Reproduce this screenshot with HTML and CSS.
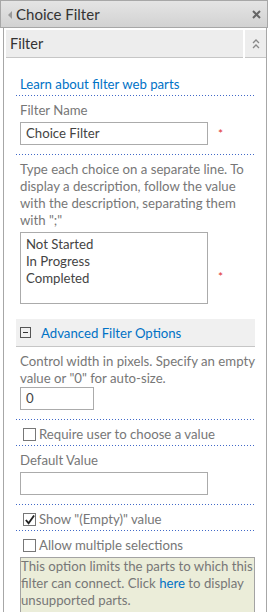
FILE: index.html
```html
<!DOCTYPE html>
<html lang="en">
<head>
  <meta charset="UTF-8" />
  <title>Choice Filter</title>
  <link rel="stylesheet" href="styles.css">
</head>
<body>
  <header class="pane-head">
    <span class="back-arrow"></span>
    <span class="pane-title">Choice Filter</span>
    <svg class="close-icon" width="9" height="9" viewBox="0 0 9 9">
      <path d="M1 1 L8 8 M8 1 L1 8" stroke="#666" stroke-width="2"/>
    </svg>
  </header>

  <div class="pane-body">
    <div class="section-bar">
      <div class="section-title">Filter</div>
      <div class="section-toggle">
        <svg width="8" height="10" viewBox="0 0 8 10">
          <path d="M1 4 L4 1 L7 4 M1 9 L4 6 L7 9" stroke="#888" stroke-width="1.3" fill="none"/>
        </svg>
      </div>
    </div>

    <div class="content">
      <div class="row link-row"><a href="#">Learn about filter web parts</a></div>

      <div class="row">
        <div class="label">Filter Name</div>
        <div class="field-line">
          <div class="input wide">Choice Filter</div>
          <span class="req">*</span>
        </div>
      </div>

      <div class="row plain">
        <p class="help">Type each choice on a separate line. To display a description, follow the value with the description, separating them with ";"</p>
        <div class="field-line">
          <div class="input wide area">Not Started<br>In Progress<br>Completed</div>
          <span class="req low">*</span>
        </div>
      </div>

      <div class="adv-bar">
        <span class="minus-box"></span>
        <a href="#">Advanced Filter Options</a>
      </div>

      <div class="row">
        <p class="help">Control width in pixels. Specify an empty value or "0" for auto-size.</p>
        <div class="input narrow">0</div>
      </div>

      <div class="row check-row">
        <span class="check"></span>Require user to choose a value
      </div>

      <div class="row">
        <div class="label">Default Value</div>
        <div class="input wide"></div>
      </div>

      <div class="row check-row">
        <span class="check">
          <svg width="12" height="12" viewBox="0 0 12 12">
            <path d="M2 6 L5 9.5 L11 1" stroke="#222" stroke-width="2" fill="none"/>
          </svg>
        </span>Show "(Empty)" value
      </div>

      <div class="check-row last">
        <span class="check"></span>Allow multiple selections
      </div>

      <div class="notice">This option limits the parts to which this filter can connect. Click <a href="#">here</a> to display unsupported parts.</div>
    </div>
  </div>
</body>
</html>
```

FILE: styles.css
```css
body {
  margin: 0;
  font-family: 'Lato', sans-serif;
  font-size: 13.2px;
  color: #777;
  background: #fff;
  height: 612px;
  overflow: hidden;
}

a {
  color: #0072c6;
  text-decoration: none;
}

.pane-head {
  display: flex;
  align-items: center;
  height: 26px;
  border: 1px solid #a7a7a7;
  background: linear-gradient(#e4e4e4, #d2d2d2);
}

.back-arrow {
  width: 0;
  height: 0;
  margin: 1px 4px 0 7px;
  border-top: 4px solid transparent;
  border-bottom: 4px solid transparent;
  border-right: 4px solid #999;
}

.pane-title {
  flex: 1;
  font-size: 15px;
  color: #333;
}

.close-icon {
  margin-right: 6px;
}

.pane-body {
  margin-left: 3px;
  margin-right: 1px;
  border-left: 1px solid #a7a7a7;
  border-right: 1px solid #a7a7a7;
  height: 585px;
  padding-top: 2px;
}

.section-bar {
  display: flex;
  gap: 2px;
  padding-left: 2px;
}

.section-title {
  flex: 1;
  height: 27px;
  line-height: 27px;
  padding-left: 4px;
  background: #ededed;
  border-bottom: 1px solid #c6c6c6;
  font-size: 14.5px;
  color: #333;
}

.section-toggle {
  width: 21px;
  display: flex;
  justify-content: center;
  align-items: center;
  background: #ededed;
  border-bottom: 1px solid #c6c6c6;
}

.content {
  padding: 18px 11px 0 12px;
}

.row {
  padding: 0 0 10px 4px;
  margin-bottom: 6px;
  background: linear-gradient(to right, #4169c8 1px, transparent 1px) bottom left / 3px 1px repeat-x;
}

.row.plain {
  background: none;
  padding-bottom: 15px;
  margin-bottom: 0;
}

.link-row {
  line-height: 17px;
  padding-bottom: 3px;
}

.label {
  line-height: 17px;
  margin-bottom: 3px;
}

.help {
  margin: 0 0 3px;
  line-height: 17px;
}

.row .help + .narrow {
  margin-top: -3px;
}

.field-line {
  display: flex;
  align-items: center;
}

.input {
  box-sizing: border-box;
  height: 23px;
  border: 1px solid #ababab;
  padding: 2px 5px;
  color: #444;
  line-height: 17px;
}

.wide {
  width: 188px;
}

.narrow {
  width: 74px;
}

.area {
  height: 72px;
  padding-top: 3px;
}

.req {
  color: #e03030;
  margin-left: 10px;
  font-size: 12px;
}

.req.low {
  margin-top: 16px;
}

.adv-bar {
  display: flex;
  align-items: center;
  gap: 10px;
  height: 27px;
  padding-left: 4px;
  margin-bottom: 6px;
  background: #f0f0f0;
  border-bottom: 1px solid #c6c6c6;
}

.minus-box {
  box-sizing: border-box;
  width: 11px;
  height: 11px;
  border: 1px solid #555;
  background: linear-gradient(#333, #333) center / 5px 1px no-repeat;
}

.check-row {
  display: flex;
  align-items: center;
  line-height: 17px;
  padding-bottom: 3px;
}

.check-row.last {
  padding: 0 0 0 4px;
  margin-bottom: 3px;
}

.check {
  box-sizing: border-box;
  width: 13px;
  height: 13px;
  border: 1px solid #777;
  margin: 0 3px 0 3px;
  display: flex;
  align-items: center;
  justify-content: center;
}

.notice {
  box-sizing: border-box;
  margin-left: 4px;
  padding: 0;
  line-height: 17px;
  background: #ebedd9;
  border: 1px solid #a3a3a3;
  height: 56px;
}
```
